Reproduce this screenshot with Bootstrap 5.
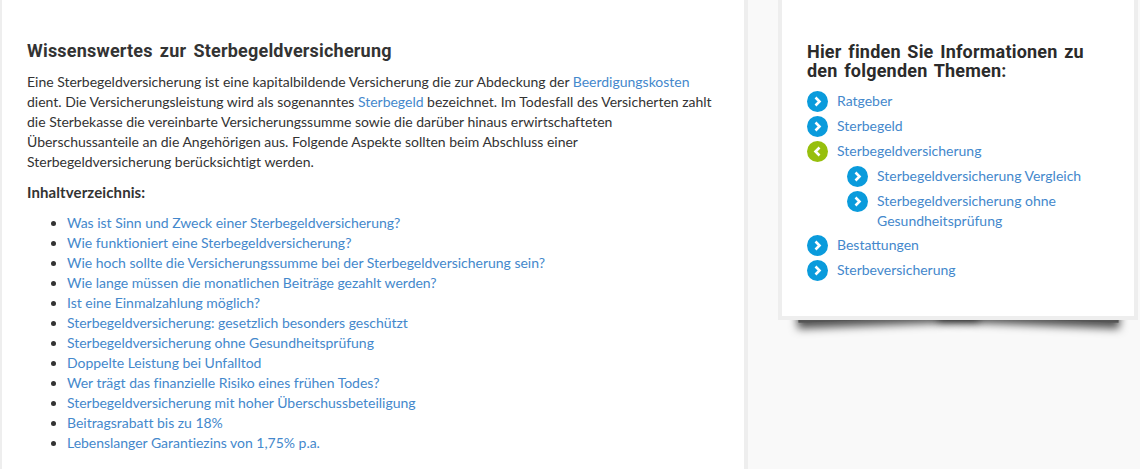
<!DOCTYPE html>
<html lang="de">
<head>
<meta charset="utf-8">
<title>Sterbegeldversicherung</title>
<link href="https://cdn.jsdelivr.net/npm/bootstrap@5.3.0/dist/css/bootstrap.min.css" rel="stylesheet">
<style>
html,body{height:469px;overflow:hidden}
body{background:#f9f9f9;font-family:"Lato",sans-serif;font-size:14px;line-height:20px;color:#333}
a{color:#4488cc;text-decoration:none}
.main-panel{width:748px;height:469px;background:#fff;border-left:2px solid #eee;border-right:4px solid #eee;padding:41px 25px 0 25px;flex:none}
.main-title{font-family:"Roboto",sans-serif;font-weight:700;font-size:18px;line-height:20px;letter-spacing:.2px;word-spacing:2.5px;color:#333;margin:0 0 11px}
.intro-text{margin:0 0 10px;letter-spacing:-.01px}
.toc-title{font-weight:700;font-size:15px;letter-spacing:.1px;margin:0 0 11px}
.toc-list{margin:0;padding-left:40px;letter-spacing:-.02px}
.side-wrap{margin-left:30px;width:360px;flex:none;align-self:flex-start;position:relative}
.side-box{position:relative;z-index:1;height:320px;background:#fff;border:4px solid #eee;border-top:0;padding:42px 25px 0}
.side-wrap::before,.side-wrap::after{content:"";position:absolute;z-index:0;top:300px;height:19px;width:50%;background:#555;box-shadow:0 5px 8px 1px rgba(0,0,0,.68)}
.side-wrap::before{left:20px;transform:rotate(-2.4deg)}
.side-wrap::after{right:19px;transform:rotate(2.4deg)}
.side-title{font-family:"Roboto",sans-serif;font-weight:700;font-size:18px;line-height:19px;letter-spacing:.2px;word-spacing:2px;color:#2b2b2b;margin:0 0 11px}
.topic-list,.topic-sub{list-style:none;margin:0;padding:0}
.topic-list li{margin-bottom:4px}
.topic-sub{margin:4px 0 0 40px}
.topic-row{display:flex;gap:9px;align-items:flex-start}
.topic-row svg{flex:none;display:block}
.topic-list .sub-last{margin-bottom:0}
</style>
</head>
<body>
<div class="d-flex">
  <main class="main-panel">
    <h2 class="main-title">Wissenswertes zur Sterbegeldversicherung</h2>
    <p class="intro-text">Eine Sterbegeldversicherung ist eine kapitalbildende Versicherung die zur Abdeckung der <a href="#">Beerdigungskosten</a> dient. Die Versicherungsleistung wird als sogenanntes <a href="#">Sterbegeld</a> bezeichnet. Im Todesfall des Versicherten zahlt die Sterbekasse die vereinbarte Versicherungssumme sowie die darüber hinaus erwirtschafteten Überschussanteile an die Angehörigen aus. Folgende Aspekte sollten beim Abschluss einer Sterbegeldversicherung berücksichtigt werden.</p>
    <p class="toc-title">Inhaltverzeichnis:</p>
    <ul class="toc-list">
      <li><a href="#">Was ist Sinn und Zweck einer Sterbegeldversicherung?</a></li>
      <li><a href="#">Wie funktioniert eine Sterbegeldversicherung?</a></li>
      <li><a href="#">Wie hoch sollte die Versicherungssumme bei der Sterbegeldversicherung sein?</a></li>
      <li><a href="#">Wie lange müssen die monatlichen Beiträge gezahlt werden?</a></li>
      <li><a href="#">Ist eine Einmalzahlung möglich?</a></li>
      <li><a href="#">Sterbegeldversicherung: gesetzlich besonders geschützt</a></li>
      <li><a href="#">Sterbegeldversicherung ohne Gesundheitsprüfung</a></li>
      <li><a href="#">Doppelte Leistung bei Unfalltod</a></li>
      <li><a href="#">Wer trägt das finanzielle Risiko eines frühen Todes?</a></li>
      <li><a href="#">Sterbegeldversicherung mit hoher Überschussbeteiligung</a></li>
      <li><a href="#">Beitragsrabatt bis zu 18%</a></li>
      <li><a href="#">Lebenslanger Garantiezins von 1,75% p.a.</a></li>
    </ul>
  </main>
  <aside class="side-wrap">
    <div class="side-box">
      <h3 class="side-title">Hier finden Sie Informationen zu den folgenden Themen:</h3>
      <ul class="topic-list">
        <li><a class="topic-row" href="#"><svg width="21" height="21" viewBox="0 0 21 21"><circle cx="10.5" cy="10.5" r="10.5" fill="#0a9bdc"/><path d="M8.5 6.5l4 4-4 4" fill="none" stroke="#fff" stroke-width="2.6"/></svg><span>Ratgeber</span></a></li>
        <li><a class="topic-row" href="#"><svg width="21" height="21" viewBox="0 0 21 21"><circle cx="10.5" cy="10.5" r="10.5" fill="#0a9bdc"/><path d="M8.5 6.5l4 4-4 4" fill="none" stroke="#fff" stroke-width="2.6"/></svg><span>Sterbegeld</span></a></li>
        <li><a class="topic-row" href="#"><svg width="21" height="21" viewBox="0 0 21 21"><circle cx="10.5" cy="10.5" r="10.5" fill="#97bf0d"/><path d="M12.5 6.5l-4 4 4 4" fill="none" stroke="#fff" stroke-width="2.6"/></svg><span>Sterbegeldversicherung</span></a>
          <ul class="topic-sub">
            <li><a class="topic-row" href="#"><svg width="21" height="21" viewBox="0 0 21 21"><circle cx="10.5" cy="10.5" r="10.5" fill="#0a9bdc"/><path d="M8.5 6.5l4 4-4 4" fill="none" stroke="#fff" stroke-width="2.6"/></svg><span>Sterbegeldversicherung Vergleich</span></a></li>
            <li class="sub-last"><a class="topic-row" href="#"><svg width="21" height="21" viewBox="0 0 21 21"><circle cx="10.5" cy="10.5" r="10.5" fill="#0a9bdc"/><path d="M8.5 6.5l4 4-4 4" fill="none" stroke="#fff" stroke-width="2.6"/></svg><span>Sterbegeldversicherung ohne Gesundheitsprüfung</span></a></li>
          </ul>
        </li>
        <li><a class="topic-row" href="#"><svg width="21" height="21" viewBox="0 0 21 21"><circle cx="10.5" cy="10.5" r="10.5" fill="#0a9bdc"/><path d="M8.5 6.5l4 4-4 4" fill="none" stroke="#fff" stroke-width="2.6"/></svg><span>Bestattungen</span></a></li>
        <li><a class="topic-row" href="#"><svg width="21" height="21" viewBox="0 0 21 21"><circle cx="10.5" cy="10.5" r="10.5" fill="#0a9bdc"/><path d="M8.5 6.5l4 4-4 4" fill="none" stroke="#fff" stroke-width="2.6"/></svg><span>Sterbeversicherung</span></a></li>
      </ul>
    </div>
  </aside>
</div>
<script src="https://cdn.jsdelivr.net/npm/bootstrap@5.3.0/dist/js/bootstrap.bundle.min.js"></script>
</body>
</html>
